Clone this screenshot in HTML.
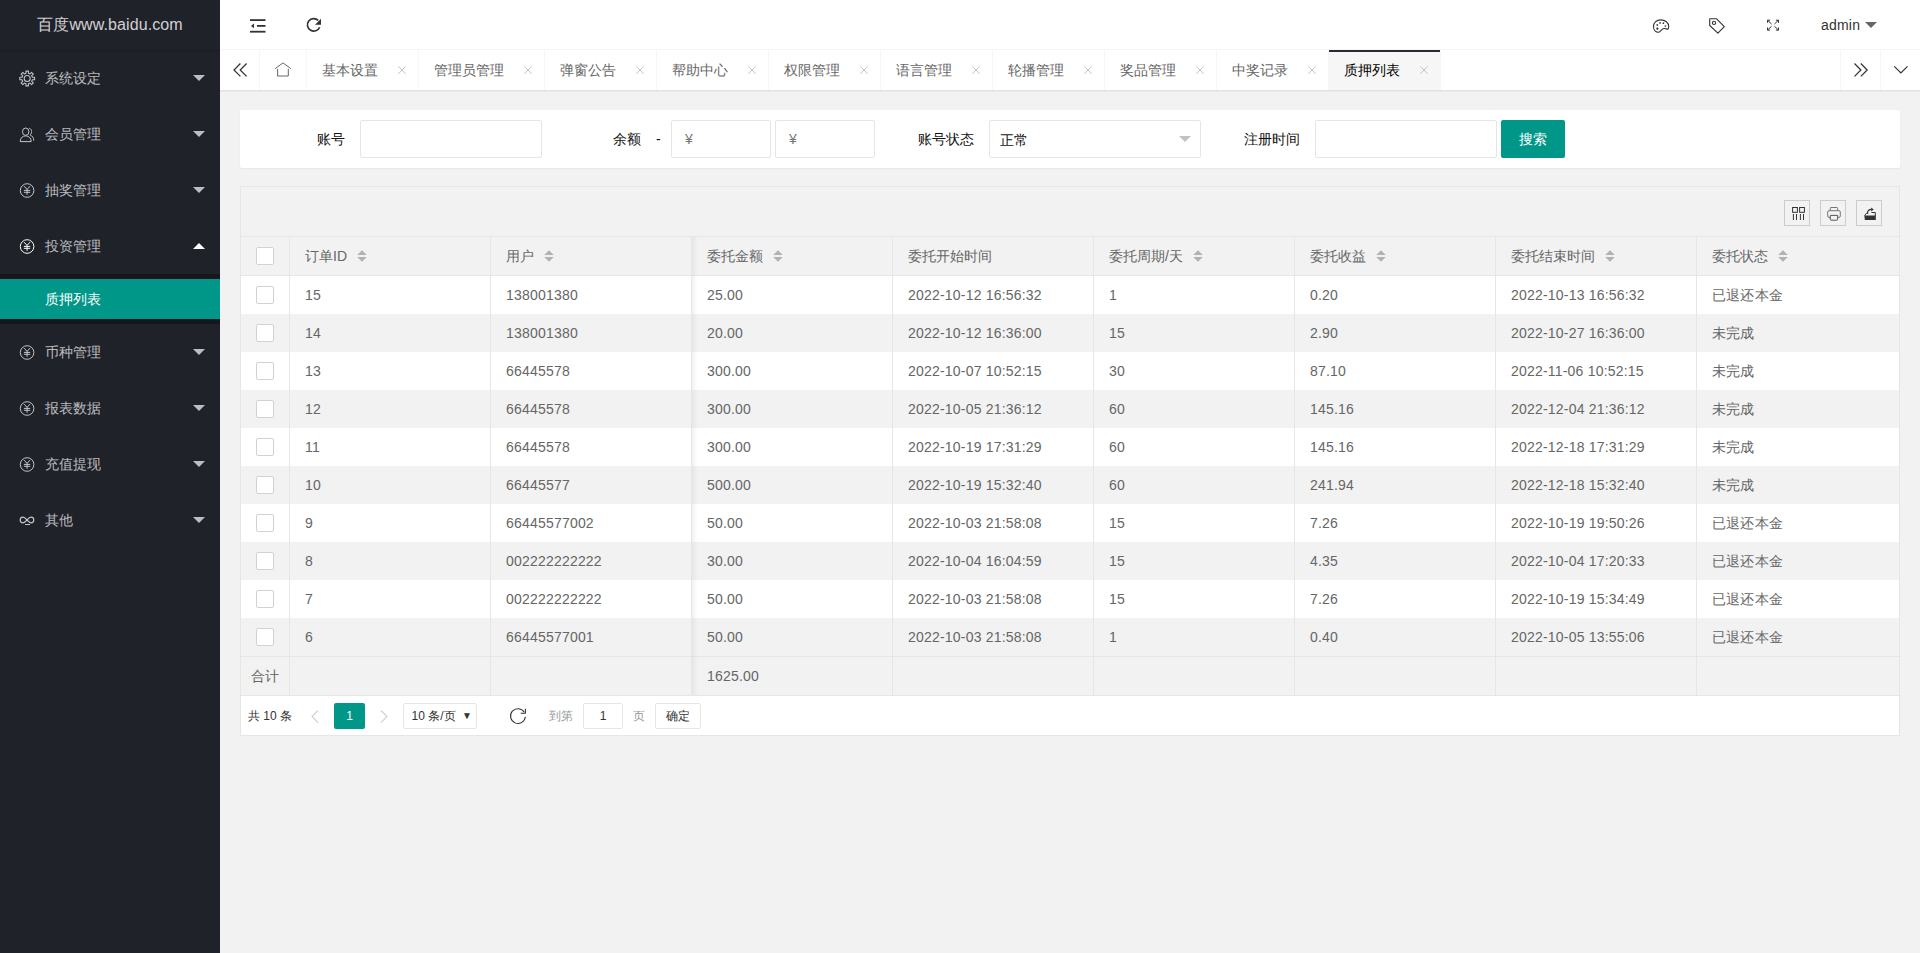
<!DOCTYPE html><html><head><meta charset="utf-8"><style>
*{margin:0;padding:0;box-sizing:border-box}
html,body{width:1920px;height:953px;overflow:hidden;background:#f2f2f2;font-family:"Liberation Sans",sans-serif;font-size:14px;color:#666}
.a{position:absolute}
#side{position:absolute;left:0;top:0;width:220px;height:953px;background:#20222a}
#logo{position:absolute;left:0;top:0;width:220px;height:50px;line-height:50px;text-align:center;color:rgba(255,255,255,.8);font-size:16px;letter-spacing:.1px;box-shadow:0 1px 2px 0 rgba(0,0,0,.15)}
.nav{position:absolute;left:0;width:220px;height:56px;color:rgba(255,255,255,.7);font-size:14px}
.nav .t{position:absolute;left:45px;top:0;line-height:56px;white-space:nowrap}
.nav svg{position:absolute;left:20px;top:21px}
.car{position:absolute;width:0;height:0;border-left:6px solid transparent;border-right:6px solid transparent;border-top:6px solid rgba(255,255,255,.7)}
.car.up{border-top:none;border-bottom:6px solid #fff}
#child{position:absolute;left:0;top:274px;width:220px;height:50px;background:rgba(0,0,0,.3)}
#child .sel{position:absolute;left:0;top:5px;width:220px;height:40px;line-height:40px;background:#009688;color:#fff}
#child .sel span{position:absolute;left:45px}
#header{position:absolute;left:220px;top:0;width:1700px;height:50px;background:#fff;border-bottom:1px solid #f6f6f6}
#tabs{position:absolute;left:220px;top:50px;width:1700px;height:40px;background:#fff;box-shadow:0 1px 2px 0 rgba(0,0,0,.1)}
.tab{position:absolute;top:0;height:40px;line-height:40px;border-right:1px solid #f6f6f6;color:#666;font-size:14px}
.tab span{position:absolute;left:15px;top:0;white-space:nowrap}
.tab svg{position:absolute}
#card{position:absolute;left:240px;top:110px;width:1660px;height:58px;background:#fff;border-radius:2px;box-shadow:0 1px 2px 0 rgba(0,0,0,.05)}
.lbl{position:absolute;color:#111;font-size:14px;line-height:20px;white-space:nowrap}
.inp{position:absolute;height:38px;border:1px solid #e6e6e6;border-radius:2px;background:#fff}
#tbl{position:absolute;left:240px;top:186px;width:1660px;height:550px;border:1px solid #e6e6e6;background:#f2f2f2}
.row{position:absolute;left:0;width:1658px;height:38px}
.cell{position:absolute;top:0;line-height:38px;white-space:nowrap;color:#666}
.num{letter-spacing:.2px}
.vl{position:absolute;width:1px;background:#e6e6e6}
.cb{position:absolute;left:15px;width:18px;height:18px;border:1px solid #d2d2d2;border-radius:2px;background:#fff}
.tb{position:absolute;top:13px;width:26px;height:26px;border:1px solid #ccc}
.tb svg{position:absolute;left:4px;top:4px}
</style></head><body>
<div id="side"><div id="logo">百度www.baidu.com</div>
<div class="nav" style="top:50px"><span class="t">系统设定</span><div class="car" style="left:193px;top:25px"></div></div>
<div class="nav" style="top:106px"><span class="t">会员管理</span><div class="car" style="left:193px;top:25px"></div></div>
<div class="nav" style="top:162px"><span class="t">抽奖管理</span><div class="car" style="left:193px;top:25px"></div></div>
<div class="nav" style="top:218px" style="color:#fff"><span class="t">投资管理</span><div class="car up" style="left:193px;top:25px"></div></div>
<div class="nav" style="top:324px"><span class="t">币种管理</span><div class="car" style="left:193px;top:25px"></div></div>
<div class="nav" style="top:380px"><span class="t">报表数据</span><div class="car" style="left:193px;top:25px"></div></div>
<div class="nav" style="top:436px"><span class="t">充值提现</span><div class="car" style="left:193px;top:25px"></div></div>
<div class="nav" style="top:492px"><span class="t">其他</span><div class="car" style="left:193px;top:25px"></div></div>
<div id="child"><div class="sel"><span>质押列表</span></div></div>
</div>
<div id="header">
<span class="a" style="left:1601px;top:17px;line-height:16px;color:#333;font-size:14px;letter-spacing:.2px">admin</span>
<div class="car" style="left:1645px;top:22px;border-top-color:#666;border-left-width:6px;border-right-width:6px"></div>
</div>
<div id="tabs">
<div class="a" style="left:0;top:0;width:40px;height:40px;border-right:1px solid #f6f6f6"></div>
<div class="tab" style="left:40px;width:47px"></div>
<div class="tab" style="left:87px;width:112px"><span>基本设置</span>
</div>
<div class="tab" style="left:199px;width:126px"><span>管理员管理</span>
</div>
<div class="tab" style="left:325px;width:112px"><span>弹窗公告</span>
</div>
<div class="tab" style="left:437px;width:112px"><span>帮助中心</span>
</div>
<div class="tab" style="left:549px;width:112px"><span>权限管理</span>
</div>
<div class="tab" style="left:661px;width:112px"><span>语言管理</span>
</div>
<div class="tab" style="left:773px;width:112px"><span>轮播管理</span>
</div>
<div class="tab" style="left:885px;width:112px"><span>奖品管理</span>
</div>
<div class="tab" style="left:997px;width:112px"><span>中奖记录</span>
</div>
<div class="tab" style="left:1109px;width:112px;background:#f6f6f6;color:#000"><span>质押列表</span>
<div class="a" style="left:0;top:0;width:111px;height:2px;background:#292b34"></div>
</div>
<div class="a" style="left:1620px;top:0;width:40px;height:40px;border-left:1px solid #f6f6f6"></div>
<div class="a" style="left:1660px;top:0;width:40px;height:40px;border-left:1px solid #f6f6f6"></div>
</div>
<div id="card">
<span class="lbl" style="left:-15px;width:120px;text-align:right;top:19px">账号</span>
<div class="inp" style="left:120px;top:10px;width:182px"></div>
<span class="lbl" style="left:281px;width:120px;text-align:right;top:19px">余额</span>
<span class="lbl" style="left:416px;top:19px">-</span>
<div class="inp" style="left:431px;top:10px;width:100px"><span class="a" style="left:13px;top:9px;line-height:18px;color:#757575">¥</span></div>
<div class="inp" style="left:535px;top:10px;width:100px"><span class="a" style="left:13px;top:9px;line-height:18px;color:#757575">¥</span></div>
<span class="lbl" style="left:614px;width:120px;text-align:right;top:19px">账号状态</span>
<div class="inp" style="left:749px;top:10px;width:212px"><span class="a" style="left:10px;top:9px;line-height:20px;color:#111">正常</span><div class="car" style="left:189px;top:15px;border-top-color:#c2c2c2"></div></div>
<span class="lbl" style="left:940px;width:120px;text-align:right;top:19px">注册时间</span>
<div class="inp" style="left:1075px;top:10px;width:182px"></div>
<div class="a" style="left:1261px;top:10px;width:64px;height:38px;background:#009688;border-radius:2px;color:#fff;line-height:38px;text-align:center">搜索</div>
</div>
<div id="tbl">
<div class="tb" style="left:1543px"></div><div class="tb" style="left:1579px"></div><div class="tb" style="left:1615px"></div>
<div class="a" style="left:0;top:49px;width:1658px;height:1px;background:#e6e6e6"></div>
<div class="row" style="top:50px;background:#f2f2f2"></div>
<div class="a" style="left:0;top:88px;width:1658px;height:1px;background:#e6e6e6"></div>
<div class="cb" style="top:60px;left:15px"></div>
<span class="cell" style="left:64px;top:50px">订单ID</span>
<svg class="a" style="left:116px;top:63px" width="10" height="12" viewBox="0 0 10 12"><path d="M5 .3l4.8 4.6H.2zM5 11.8l4.8-4.7H.2z" fill="#b2b2b2"/></svg>
<span class="cell" style="left:265px;top:50px">用户</span>
<svg class="a" style="left:303px;top:63px" width="10" height="12" viewBox="0 0 10 12"><path d="M5 .3l4.8 4.6H.2zM5 11.8l4.8-4.7H.2z" fill="#b2b2b2"/></svg>
<span class="cell" style="left:466px;top:50px">委托金额</span>
<svg class="a" style="left:532px;top:63px" width="10" height="12" viewBox="0 0 10 12"><path d="M5 .3l4.8 4.6H.2zM5 11.8l4.8-4.7H.2z" fill="#b2b2b2"/></svg>
<span class="cell" style="left:667px;top:50px">委托开始时间</span>
<span class="cell" style="left:868px;top:50px">委托周期/天</span>
<svg class="a" style="left:952px;top:63px" width="10" height="12" viewBox="0 0 10 12"><path d="M5 .3l4.8 4.6H.2zM5 11.8l4.8-4.7H.2z" fill="#b2b2b2"/></svg>
<span class="cell" style="left:1069px;top:50px">委托收益</span>
<svg class="a" style="left:1135px;top:63px" width="10" height="12" viewBox="0 0 10 12"><path d="M5 .3l4.8 4.6H.2zM5 11.8l4.8-4.7H.2z" fill="#b2b2b2"/></svg>
<span class="cell" style="left:1270px;top:50px">委托结束时间</span>
<svg class="a" style="left:1364px;top:63px" width="10" height="12" viewBox="0 0 10 12"><path d="M5 .3l4.8 4.6H.2zM5 11.8l4.8-4.7H.2z" fill="#b2b2b2"/></svg>
<span class="cell" style="left:1471px;top:50px">委托状态</span>
<svg class="a" style="left:1537px;top:63px" width="10" height="12" viewBox="0 0 10 12"><path d="M5 .3l4.8 4.6H.2zM5 11.8l4.8-4.7H.2z" fill="#b2b2b2"/></svg>
<div class="row" style="top:89px;background:#fff">
<div class="cb" style="top:10px;left:15px"></div>
<span class="cell num" style="left:64px">15</span>
<span class="cell num" style="left:265px">138001380</span>
<span class="cell num" style="left:466px">25.00</span>
<span class="cell num" style="left:667px">2022-10-12 16:56:32</span>
<span class="cell num" style="left:868px">1</span>
<span class="cell num" style="left:1069px">0.20</span>
<span class="cell num" style="left:1270px">2022-10-13 16:56:32</span>
<span class="cell num" style="left:1471px">已退还本金</span>
</div>
<div class="row" style="top:127px;background:#f2f2f2">
<div class="cb" style="top:10px;left:15px"></div>
<span class="cell num" style="left:64px">14</span>
<span class="cell num" style="left:265px">138001380</span>
<span class="cell num" style="left:466px">20.00</span>
<span class="cell num" style="left:667px">2022-10-12 16:36:00</span>
<span class="cell num" style="left:868px">15</span>
<span class="cell num" style="left:1069px">2.90</span>
<span class="cell num" style="left:1270px">2022-10-27 16:36:00</span>
<span class="cell num" style="left:1471px">未完成</span>
</div>
<div class="row" style="top:165px;background:#fff">
<div class="cb" style="top:10px;left:15px"></div>
<span class="cell num" style="left:64px">13</span>
<span class="cell num" style="left:265px">66445578</span>
<span class="cell num" style="left:466px">300.00</span>
<span class="cell num" style="left:667px">2022-10-07 10:52:15</span>
<span class="cell num" style="left:868px">30</span>
<span class="cell num" style="left:1069px">87.10</span>
<span class="cell num" style="left:1270px">2022-11-06 10:52:15</span>
<span class="cell num" style="left:1471px">未完成</span>
</div>
<div class="row" style="top:203px;background:#f2f2f2">
<div class="cb" style="top:10px;left:15px"></div>
<span class="cell num" style="left:64px">12</span>
<span class="cell num" style="left:265px">66445578</span>
<span class="cell num" style="left:466px">300.00</span>
<span class="cell num" style="left:667px">2022-10-05 21:36:12</span>
<span class="cell num" style="left:868px">60</span>
<span class="cell num" style="left:1069px">145.16</span>
<span class="cell num" style="left:1270px">2022-12-04 21:36:12</span>
<span class="cell num" style="left:1471px">未完成</span>
</div>
<div class="row" style="top:241px;background:#fff">
<div class="cb" style="top:10px;left:15px"></div>
<span class="cell num" style="left:64px">11</span>
<span class="cell num" style="left:265px">66445578</span>
<span class="cell num" style="left:466px">300.00</span>
<span class="cell num" style="left:667px">2022-10-19 17:31:29</span>
<span class="cell num" style="left:868px">60</span>
<span class="cell num" style="left:1069px">145.16</span>
<span class="cell num" style="left:1270px">2022-12-18 17:31:29</span>
<span class="cell num" style="left:1471px">未完成</span>
</div>
<div class="row" style="top:279px;background:#f2f2f2">
<div class="cb" style="top:10px;left:15px"></div>
<span class="cell num" style="left:64px">10</span>
<span class="cell num" style="left:265px">66445577</span>
<span class="cell num" style="left:466px">500.00</span>
<span class="cell num" style="left:667px">2022-10-19 15:32:40</span>
<span class="cell num" style="left:868px">60</span>
<span class="cell num" style="left:1069px">241.94</span>
<span class="cell num" style="left:1270px">2022-12-18 15:32:40</span>
<span class="cell num" style="left:1471px">未完成</span>
</div>
<div class="row" style="top:317px;background:#fff">
<div class="cb" style="top:10px;left:15px"></div>
<span class="cell num" style="left:64px">9</span>
<span class="cell num" style="left:265px">66445577002</span>
<span class="cell num" style="left:466px">50.00</span>
<span class="cell num" style="left:667px">2022-10-03 21:58:08</span>
<span class="cell num" style="left:868px">15</span>
<span class="cell num" style="left:1069px">7.26</span>
<span class="cell num" style="left:1270px">2022-10-19 19:50:26</span>
<span class="cell num" style="left:1471px">已退还本金</span>
</div>
<div class="row" style="top:355px;background:#f2f2f2">
<div class="cb" style="top:10px;left:15px"></div>
<span class="cell num" style="left:64px">8</span>
<span class="cell num" style="left:265px">002222222222</span>
<span class="cell num" style="left:466px">30.00</span>
<span class="cell num" style="left:667px">2022-10-04 16:04:59</span>
<span class="cell num" style="left:868px">15</span>
<span class="cell num" style="left:1069px">4.35</span>
<span class="cell num" style="left:1270px">2022-10-04 17:20:33</span>
<span class="cell num" style="left:1471px">已退还本金</span>
</div>
<div class="row" style="top:393px;background:#fff">
<div class="cb" style="top:10px;left:15px"></div>
<span class="cell num" style="left:64px">7</span>
<span class="cell num" style="left:265px">002222222222</span>
<span class="cell num" style="left:466px">50.00</span>
<span class="cell num" style="left:667px">2022-10-03 21:58:08</span>
<span class="cell num" style="left:868px">15</span>
<span class="cell num" style="left:1069px">7.26</span>
<span class="cell num" style="left:1270px">2022-10-19 15:34:49</span>
<span class="cell num" style="left:1471px">已退还本金</span>
</div>
<div class="row" style="top:431px;background:#f2f2f2">
<div class="cb" style="top:10px;left:15px"></div>
<span class="cell num" style="left:64px">6</span>
<span class="cell num" style="left:265px">66445577001</span>
<span class="cell num" style="left:466px">50.00</span>
<span class="cell num" style="left:667px">2022-10-03 21:58:08</span>
<span class="cell num" style="left:868px">1</span>
<span class="cell num" style="left:1069px">0.40</span>
<span class="cell num" style="left:1270px">2022-10-05 13:55:06</span>
<span class="cell num" style="left:1471px">已退还本金</span>
</div>
<div class="a" style="left:0;top:469px;width:1658px;height:1px;background:#e6e6e6"></div>
<span class="cell" style="left:10px;top:470px">合计</span>
<span class="cell num" style="left:466px;top:470px">1625.00</span>
<div class="a" style="left:0;top:508px;width:1658px;height:1px;background:#e6e6e6"></div>
<div class="vl" style="left:48px;top:49px;height:459px"></div>
<div class="vl" style="left:249px;top:49px;height:459px"></div>
<div class="vl" style="left:450px;top:49px;height:459px"></div>
<div class="vl" style="left:651px;top:49px;height:459px"></div>
<div class="vl" style="left:852px;top:49px;height:459px"></div>
<div class="vl" style="left:1053px;top:49px;height:459px"></div>
<div class="vl" style="left:1254px;top:49px;height:459px"></div>
<div class="vl" style="left:1455px;top:49px;height:459px"></div>
<div class="a" style="left:451px;top:50px;width:6px;height:458px;background:linear-gradient(to right,rgba(0,0,0,.05),rgba(0,0,0,0))"></div>
<div class="a" style="left:0;top:509px;width:1658px;height:39px;background:#fff;font-size:12px;color:#333">
<span class="a" style="left:7px;top:13px;line-height:14px">共 10 条</span>
<svg class="a" style="left:70px;top:14px" width="8" height="13" viewBox="0 0 8 13"><path d="M7 .5 1 6.5l6 6" fill="none" stroke="#d2d2d2" stroke-width="1.2"/></svg>
<div class="a" style="left:93px;top:7px;width:31px;height:26px;background:#009688;border-radius:2px;color:#fff;text-align:center;line-height:26px">1</div>
<svg class="a" style="left:139px;top:14px" width="8" height="13" viewBox="0 0 8 13"><path d="M1 .5l6 6-6 6" fill="none" stroke="#d2d2d2" stroke-width="1.2"/></svg>
<div class="a" style="left:162px;top:7px;width:74px;height:26px;border:1px solid #e6e6e6;border-radius:2px;line-height:24px;padding-left:7.5px;color:#333">10 条/页<span class="a" style="left:58px;top:0;font-size:10px">▼</span></div>
<span class="a" style="left:308px;top:13px;line-height:14px;color:#999">到第</span>
<div class="a" style="left:342px;top:7px;width:40px;height:26px;border:1px solid #e6e6e6;border-radius:2px;line-height:24px;text-align:center;color:#333">1</div>
<span class="a" style="left:392px;top:13px;line-height:14px;color:#999">页</span>
<div class="a" style="left:414px;top:7px;width:46px;height:26px;border:1px solid #e6e6e6;border-radius:2px;line-height:24px;text-align:center;color:#333">确定</div>
</div>
</div>
<svg style="position:absolute;left:14px;top:68px;overflow:visible" width="26" height="22" viewBox="14 68 26 22"><g fill="none" stroke="#c4c5c7" stroke-width="1.05"><path d="M26.01 73.34 L25.90 71.11 L28.50 71.11 L28.39 73.34 L30.01 74.01 L31.50 72.36 L33.34 74.20 L31.69 75.69 L32.36 77.31 L34.59 77.20 L34.59 79.80 L32.36 79.69 L31.69 81.31 L33.34 82.80 L31.50 84.64 L30.01 82.99 L28.39 83.66 L28.50 85.89 L25.90 85.89 L26.01 83.66 L24.39 82.99 L22.90 84.64 L21.06 82.80 L22.71 81.31 L22.04 79.69 L19.81 79.80 L19.81 77.20 L22.04 77.31 L22.71 75.69 L21.06 74.20 L22.90 72.36 L24.39 74.01Z" stroke-linejoin="round"/><circle cx="27.2" cy="78.5" r="3"/></g></svg>
<svg style="position:absolute;left:14px;top:124px;overflow:visible" width="26" height="22" viewBox="14 124 26 22"><g fill="none" stroke="#c4c5c7" stroke-width="1"><ellipse cx="25.7" cy="131.7" rx="3.2" ry="3.7"/><path d="M20.200 141.6C20.200 138.2 22.500 135.9 25.700 135.9S31.200 138.2 31.200 141.6Z"/><path d="M29.300 128.3C30.800 128.6 31.600 130 31.600 131.6C31.600 133 31 134.2 30 134.9C32.300 135.9 33.800 137.8 33.800 140.6"/></g></svg>
<svg style="position:absolute;left:14px;top:180px;overflow:visible" width="26" height="22" viewBox="14 180 26 22"><g fill="none" stroke="#c4c5c7" stroke-width="1"><circle cx="27.1" cy="190.5" r="6.8"/><path d="M24 186.1 27.050 189.4 30.100 186.1M27.050 189.4V194.8M23.900 190.4H30.200M23.900 192.3H30.200"/></g></svg>
<svg style="position:absolute;left:14px;top:236px;overflow:visible" width="26" height="22" viewBox="14 236 26 22"><g fill="none" stroke="#fff" stroke-width="1"><circle cx="27.1" cy="246.5" r="6.8"/><path d="M24 242.1 27.050 245.4 30.100 242.1M27.050 245.4V250.8M23.900 246.4H30.200M23.900 248.3H30.200"/></g></svg>
<svg style="position:absolute;left:14px;top:342px;overflow:visible" width="26" height="22" viewBox="14 342 26 22"><g fill="none" stroke="#c4c5c7" stroke-width="1"><circle cx="27.1" cy="352.5" r="6.8"/><path d="M24 348.1 27.050 351.4 30.100 348.1M27.050 351.4V356.8M23.900 352.4H30.200M23.900 354.3H30.200"/></g></svg>
<svg style="position:absolute;left:14px;top:398px;overflow:visible" width="26" height="22" viewBox="14 398 26 22"><g fill="none" stroke="#c4c5c7" stroke-width="1"><circle cx="27.1" cy="408.5" r="6.8"/><path d="M24 404.1 27.050 407.4 30.100 404.1M27.050 407.4V412.8M23.900 408.4H30.200M23.900 410.3H30.200"/></g></svg>
<svg style="position:absolute;left:14px;top:454px;overflow:visible" width="26" height="22" viewBox="14 454 26 22"><g fill="none" stroke="#c4c5c7" stroke-width="1"><circle cx="27.1" cy="464.5" r="6.8"/><path d="M24 460.1 27.050 463.4 30.100 460.1M27.050 463.4V468.8M23.900 464.4H30.200M23.900 466.3H30.200"/></g></svg>
<svg style="position:absolute;left:14px;top:510px;overflow:visible" width="26" height="22" viewBox="14 510 26 22"><g fill="none" stroke="#c4c5c7" stroke-width="1.2"><path d="M27 520C25.600 518.4 24.600 517.2 23 517.2A2.800 2.800 0 0 0 23 522.8C24.600 522.8 25.600 521.6 27 520S29.400 517.2 31 517.2A2.800 2.800 0 0 1 31 522.8C29.400 522.8 28.400 521.6 27 520Z"/></g><rect x="25" y="524" width="5" height="1" fill="#c4c5c7"/></svg>
<svg style="position:absolute;left:248px;top:17px;overflow:visible" width="20" height="18" viewBox="248 17 20 18"><g fill="#333"><rect x="250" y="19.2" width="15.5" height="1.8"/><rect x="257" y="25" width="8.5" height="1.8"/><rect x="250" y="30.8" width="15.5" height="1.8"/><path d="M251 25.9l3-2.4v4.8z"/></g></svg>
<svg style="position:absolute;left:304px;top:16px;overflow:visible" width="20" height="20" viewBox="304 16 20 20"><path d="M319.6 27.2A6.3 6.3 0 1 1 318.2 20.4" fill="none" stroke="#333" stroke-width="1.7"/><path d="M321 18.8v6h-6z" fill="#333"/></svg>
<svg style="position:absolute;left:1648px;top:14px;overflow:visible" width="28" height="24" viewBox="1648 14 28 24"><g fill="none" stroke="#333" stroke-width="1.1"><path d="M1660.6 19.9C1656.3 19.9 1653.5 22.9 1653.5 26.3 1653.5 29.8 1655.6 32.3 1658.200 32.3 1660.500 32.300 1661.300 28.500 1664.100 28.500 1666 28.500 1667 29.200 1667.800 29.100 1668.600 29 1668.700 27.600 1668.700 26.500 1668.700 22.500 1665.200 19.900 1660.600 19.900Z"/></g><g fill="#333"><circle cx="1660.1" cy="22.9" r=".85"/><circle cx="1663.4" cy="23.2" r=".85"/><circle cx="1657.3" cy="24.9" r=".85"/><circle cx="1665.4" cy="26" r=".85"/><circle cx="1657.4" cy="28.7" r="1.15"/></g></svg>
<svg style="position:absolute;left:1704px;top:14px;overflow:visible" width="28" height="24" viewBox="1704 14 28 24"><g fill="none" stroke="#333" stroke-width="1.1"><path d="M1709.900 18.800H1716.600L1724.300 26.700 1717.900 33.200 1709.700 25.500V19Z" stroke-linejoin="round"/><circle cx="1714" cy="22.900" r="1.6"/></g></svg>
<svg style="position:absolute;left:1760px;top:14px;overflow:visible" width="28" height="24" viewBox="1760 14 28 24"><g fill="none" stroke="#333" stroke-width="1"><path d="M1767.500 22.800V20.200H1770.100M1767.600 20.300 1771.600 24.100M1778.500 22.800V20.200H1775.900M1778.400 20.300 1774.400 24.100M1767.500 27.500V30.100H1770.100M1767.600 30 1771.600 26.200M1778.500 27.500V30.100H1775.900M1778.400 30 1774.400 26.200"/></g></svg>
<svg style="position:absolute;left:228px;top:58px;overflow:visible" width="24" height="24" viewBox="228 58 24 24"><path d="M240.400 63.500 234 69.950l6.400 6.450M246.600 63.500 240.200 69.950l6.400 6.450" fill="none" stroke="#333" stroke-width="1.25"/></svg>
<svg style="position:absolute;left:270px;top:58px;overflow:visible" width="26" height="24" viewBox="270 58 26 24"><path d="M275.200 68.600 283 62.900l7.800 5.700M277.600 68.900V76h10.700V68.900" fill="none" stroke="#666" stroke-width="1"/></svg>
<svg style="position:absolute;left:396px;top:62px;overflow:visible" width="12" height="16" viewBox="396 62 12 16"><path d="M398.4 66.500l7.200 7.200M405.6 66.500l-7.200 7.200" stroke="#c2c2c2" stroke-width="1" fill="none"/></svg>
<svg style="position:absolute;left:522px;top:62px;overflow:visible" width="12" height="16" viewBox="522 62 12 16"><path d="M524.4 66.500l7.200 7.200M531.6 66.500l-7.200 7.200" stroke="#c2c2c2" stroke-width="1" fill="none"/></svg>
<svg style="position:absolute;left:634px;top:62px;overflow:visible" width="12" height="16" viewBox="634 62 12 16"><path d="M636.4 66.500l7.200 7.200M643.6 66.500l-7.200 7.200" stroke="#c2c2c2" stroke-width="1" fill="none"/></svg>
<svg style="position:absolute;left:746px;top:62px;overflow:visible" width="12" height="16" viewBox="746 62 12 16"><path d="M748.4 66.500l7.200 7.200M755.6 66.500l-7.200 7.200" stroke="#c2c2c2" stroke-width="1" fill="none"/></svg>
<svg style="position:absolute;left:858px;top:62px;overflow:visible" width="12" height="16" viewBox="858 62 12 16"><path d="M860.4 66.500l7.200 7.200M867.6 66.500l-7.200 7.200" stroke="#c2c2c2" stroke-width="1" fill="none"/></svg>
<svg style="position:absolute;left:970px;top:62px;overflow:visible" width="12" height="16" viewBox="970 62 12 16"><path d="M972.4 66.500l7.200 7.200M979.6 66.500l-7.200 7.200" stroke="#c2c2c2" stroke-width="1" fill="none"/></svg>
<svg style="position:absolute;left:1082px;top:62px;overflow:visible" width="12" height="16" viewBox="1082 62 12 16"><path d="M1084.4 66.500l7.200 7.200M1091.6 66.500l-7.200 7.200" stroke="#c2c2c2" stroke-width="1" fill="none"/></svg>
<svg style="position:absolute;left:1194px;top:62px;overflow:visible" width="12" height="16" viewBox="1194 62 12 16"><path d="M1196.4 66.500l7.200 7.200M1203.6 66.500l-7.200 7.200" stroke="#c2c2c2" stroke-width="1" fill="none"/></svg>
<svg style="position:absolute;left:1306px;top:62px;overflow:visible" width="12" height="16" viewBox="1306 62 12 16"><path d="M1308.4 66.500l7.200 7.200M1315.6 66.500l-7.200 7.200" stroke="#c2c2c2" stroke-width="1" fill="none"/></svg>
<svg style="position:absolute;left:1418px;top:62px;overflow:visible" width="12" height="16" viewBox="1418 62 12 16"><path d="M1420.4 66.500l7.200 7.200M1427.6 66.500l-7.200 7.200" stroke="#c2c2c2" stroke-width="1" fill="none"/></svg>
<svg style="position:absolute;left:1848px;top:58px;overflow:visible" width="24" height="24" viewBox="1848 58 24 24"><path d="M1854.500 63.500 1860.900 69.950l-6.400 6.450M1860.800 63.500 1867.200 69.950l-6.400 6.450" fill="none" stroke="#333" stroke-width="1.25"/></svg>
<svg style="position:absolute;left:1890px;top:60px;overflow:visible" width="22" height="20" viewBox="1890 60 22 20"><path d="M1894.300 66.300 1900.900 72.900 1907.500 66.300" fill="none" stroke="#333" stroke-width="1.2"/></svg>
<svg style="position:absolute;left:1786px;top:202px;overflow:visible" width="22" height="22" viewBox="1786 202 22 22"><g fill="none" stroke="#333" stroke-width="1"><rect x="1792.600" y="207.500" width="4.800" height="4.800"/><rect x="1799.600" y="207.500" width="4.800" height="4.800"/><path d="M1793.400 214V220M1796.500 214V220M1800.400 214V220M1803.500 214V220"/></g></svg>
<svg style="position:absolute;left:1822px;top:202px;overflow:visible" width="22" height="22" viewBox="1822 202 22 22"><g fill="none" stroke="#777" stroke-width="1"><path d="M1830.300 210.600V208.200Q1830.300 207.500 1831 207.500H1836.900Q1837.600 207.500 1837.600 208.200V210.600"/><path d="M1830 217.400H1829Q1827.700 217.400 1827.700 216V212Q1827.700 210.700 1829 210.700H1839Q1840.300 210.700 1840.300 212V216Q1840.300 217.400 1839 217.400H1838"/><path d="M1830.300 215.400H1837.600V219.500Q1837.600 220.200 1836.900 220.200H1831Q1830.300 220.200 1830.300 219.500Z" stroke="#555"/></g></svg>
<svg style="position:absolute;left:1858px;top:202px;overflow:visible" width="22" height="22" viewBox="1858 202 22 22"><path d="M1864.300 215.600H1875.800V219.900H1864.900Z" fill="#333"/><path d="M1864.600 215.800 1866.400 213.300H1868.300M1871.400 212.500H1875.300V216" fill="none" stroke="#333" stroke-width="1"/><path d="M1867.400 213.600C1867.400 210.900 1869 209.400 1871.600 209.400" fill="none" stroke="#333" stroke-width="1.1"/><path d="M1871.200 207.400 1873.700 209.400 1871.200 211.400Z" fill="#333"/></svg>
<svg style="position:absolute;left:506px;top:704px;overflow:visible" width="24" height="24" viewBox="506 704 24 24"><g fill="none" stroke="#333" stroke-width="1.05"><path d="M525.300 716.700A7.400 7.400 0 1 1 524.300 712.300"/><path d="M525.400 708.800V713.300H520.700"/></g></svg>
</body></html>
